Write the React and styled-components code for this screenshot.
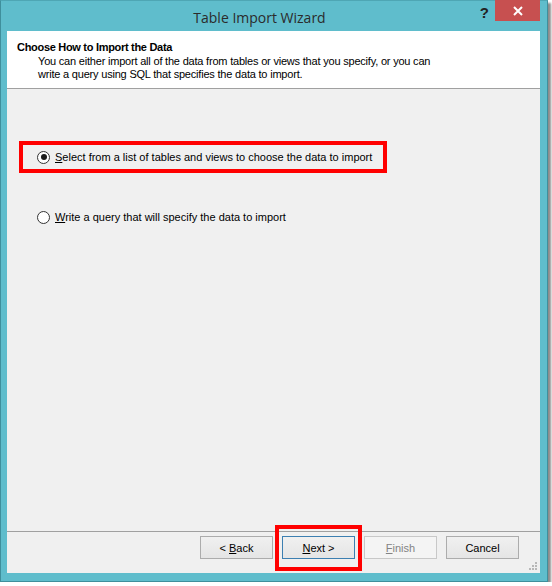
import React from 'react';
import styled, { createGlobalStyle } from 'styled-components';

const GlobalStyle = createGlobalStyle`
	html, body {
		margin: 0;
		padding: 0;
		background: #ffffff;
	}
	body {
		font-family: "Liberation Sans", Arial, sans-serif;
	}
`;

const App = () => {
	return (
		<>
			<GlobalStyle />
			<Window>
				<TitleBar>
					<Title>Table Import Wizard</Title>
					<HelpButton>?</HelpButton>
					<CloseButton>
						<svg width="10" height="10" viewBox="0 0 10 10">
							<path d="M1 1 L9 9 M9 1 L1 9" stroke="#fff" strokeWidth="2" />
						</svg>
					</CloseButton>
				</TitleBar>
				<Client>
					<Header>
						<HeaderTitle>Choose How to Import the Data</HeaderTitle>
						<HeaderText>
							You can either import all of the data from tables or views that you specify, or you can
							<br />
							write a query using SQL that specifies the data to import.
						</HeaderText>
					</Header>
					<Body>
						<Options>
							<Highlight>
								<Option>
									<Radio checked />
									<Label>
										<u>S</u>elect from a list of tables and views to choose the data to import
									</Label>
								</Option>
							</Highlight>
							<PlainOption>
								<Option>
									<Radio />
									<Label>
										<u>W</u>rite a query that will specify the data to import
									</Label>
								</Option>
							</PlainOption>
						</Options>
						<Footer>
							<Button>
								<span>&lt; <u>B</u>ack</span>
							</Button>
							<NextHighlight>
								<Button focused>
									<span><u>N</u>ext &gt;</span>
								</Button>
							</NextHighlight>
							<Button disabled>
								<span><u>F</u>inish</span>
							</Button>
							<Button>
								<span>Cancel</span>
							</Button>
						</Footer>
						<Grip>
							<svg width="8" height="8" viewBox="0 0 8 8">
								<rect x="6" y="0" width="2" height="2" fill="#b8b8b8" />
								<rect x="3" y="3" width="2" height="2" fill="#b8b8b8" />
								<rect x="6" y="3" width="2" height="2" fill="#b8b8b8" />
								<rect x="0" y="6" width="2" height="2" fill="#b8b8b8" />
								<rect x="3" y="6" width="2" height="2" fill="#b8b8b8" />
								<rect x="6" y="6" width="2" height="2" fill="#b8b8b8" />
							</svg>
						</Grip>
					</Body>
				</Client>
			</Window>
		</>
	);
};

export default App;

const Window = styled.div`
	width: 548px;
	height: 582px;
	box-sizing: border-box;
	background-color: #5fbdcc;
	border: 1px solid #3f8f9c;
	border-top-color: #4ea6b4;
	box-shadow: 3px 3px 2px rgba(0, 0, 0, 0.45);
	padding: 0 7px 8px 6px;
	display: flex;
	flex-direction: column;
`;

const TitleBar = styled.div`
	height: 30px;
	position: relative;
	display: flex;
	align-items: center;
	justify-content: center;
`;

const Title = styled.div`
	font-family: "Open Sans", "Liberation Sans", sans-serif;
	font-size: 14px;
	color: #2b2b2b;
	margin-left: -28px;
	margin-top: 2px;
`;

const HelpButton = styled.div`
	position: absolute;
	right: 51px;
	top: 3px;
	font-family: "Liberation Sans", sans-serif;
	font-weight: bold;
	font-size: 15px;
	color: #222;
`;

const CloseButton = styled.div`
	position: absolute;
	right: 0;
	top: -1px;
	width: 45px;
	height: 21px;
	background-color: #c75050;
	display: flex;
	align-items: center;
	justify-content: center;
`;

const Client = styled.div`
	flex: 1;
	display: flex;
	flex-direction: column;
	background-color: #f0f0f0;
	font-size: 11px;
	color: #000;
`;

const Header = styled.div`
	height: 58px;
	background-color: #ffffff;
	border-bottom: 1px solid #a0a0a0;
	padding: 10px 0 0 10px;
	box-sizing: border-box;
`;

const HeaderTitle = styled.div`
	font-weight: bold;
	font-size: 11px;
	letter-spacing: -0.3px;
	line-height: 13px;
`;

const HeaderText = styled.div`
	padding-left: 21px;
	font-size: 11px;
	letter-spacing: -0.2px;
	line-height: 13px;
	margin-top: 1px;
`;

const Body = styled.div`
	flex: 1;
	display: flex;
	flex-direction: column;
	position: relative;
`;

const Options = styled.div`
	flex: 1;
	padding: 52px 0 0 12px;
	display: flex;
	flex-direction: column;
	gap: 28px;
`;

const Highlight = styled.div`
	width: 368px;
	height: 32px;
	box-sizing: border-box;
	border: 4px solid #ff0000;
	display: flex;
	align-items: center;
	padding-left: 14px;
`;

const PlainOption = styled.div`
	height: 32px;
	display: flex;
	align-items: center;
	padding-left: 18px;
`;

const Option = styled.div`
	display: flex;
	align-items: center;
	gap: 5px;
`;

const Radio = styled.span`
	width: 11px;
	height: 11px;
	border-radius: 50%;
	border: 1px solid #333;
	background: #fff;
	position: relative;
	flex-shrink: 0;

	&::after {
		content: '';
		display: ${props => (props.checked ? 'block' : 'none')};
		position: absolute;
		left: 2.5px;
		top: 2.5px;
		width: 6px;
		height: 6px;
		border-radius: 50%;
		background: #1a1a1a;
	}
`;

const Label = styled.span`
	font-size: 11px;
	color: #000;
	white-space: nowrap;
`;

const Footer = styled.div`
	height: 42px;
	border-top: 1px solid #a0a0a0;
	box-sizing: border-box;
	display: flex;
	align-items: flex-start;
	justify-content: flex-end;
	gap: 9px;
	padding: 4px 21px 0 0;
`;

const NextHighlight = styled.div`
	width: 87px;
	height: 46px;
	box-sizing: border-box;
	border: 4px solid #ff0000;
	margin: -11px -7px 0;
	padding-top: 7px;
	display: flex;
	align-items: flex-start;
	justify-content: center;
	position: relative;
	z-index: 1;
`;

const Button = styled.div`
	width: 73px;
	height: 23px;
	box-sizing: border-box;
	border: 1px solid ${props => (props.focused ? '#3c7fb1' : props.disabled ? '#c8c8c8' : '#acacac')};
	background: ${props => (props.disabled ? '#f4f4f4' : 'linear-gradient(#f0f0f0, #e5e5e5)')};
	color: ${props => (props.disabled ? '#838383' : '#000')};
	font-size: 11px;
	display: flex;
	align-items: center;
	justify-content: center;
	flex-shrink: 0;
`;

const Grip = styled.div`
	position: absolute;
	right: 3px;
	bottom: 3px;
	width: 8px;
	height: 8px;
	display: flex;
`;
